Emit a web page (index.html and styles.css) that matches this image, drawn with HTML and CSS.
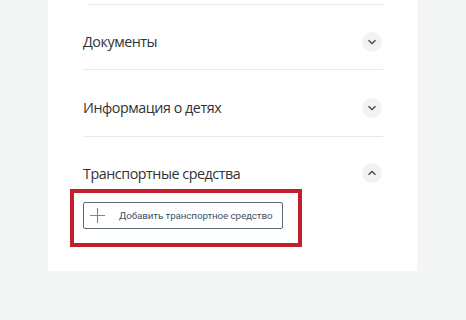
FILE: index.html
```html
<!DOCTYPE html>
<html lang="ru">
<head>
<meta charset="utf-8">
<link rel="stylesheet" href="styles.css">
</head>
<body>
<div class="page">
  <div class="card">
    <div class="top-line"></div>
    <div class="row">
      <span class="title">Документы</span>
      <span class="chev"><svg width="10" height="6" viewBox="0 0 10 6"><path d="M1.5 1.2 L5 4.6 L8.5 1.2" fill="none" stroke="#4a4f55" stroke-width="1.4"/></svg></span>
    </div>
    <div class="row">
      <span class="title">Информация о детях</span>
      <span class="chev"><svg width="10" height="6" viewBox="0 0 10 6"><path d="M1.5 1.2 L5 4.6 L8.5 1.2" fill="none" stroke="#4a4f55" stroke-width="1.4"/></svg></span>
    </div>
    <div class="row open">
      <span class="title">Транспортные средства</span>
      <span class="chev"><svg width="10" height="6" viewBox="0 0 10 6"><path d="M1.5 4.8 L5 1.4 L8.5 4.8" fill="none" stroke="#4a4f55" stroke-width="1.4"/></svg></span>
    </div>
    <div class="highlight">
      <button class="add-btn">
        <svg class="plus" width="15" height="15" viewBox="0 0 15 15"><path d="M7.5 0 V15 M0 7.5 H15" stroke="#7d858c" stroke-width="1.1"/></svg>
        <span class="btn-label">Добавить транспортное средство</span>
      </button>
    </div>
  </div>
</div>
</body>
</html>
```

FILE: styles.css
```css
html, body {
  margin: 0;
  padding: 0;
  background: #f3f5f5;
}
.page {
  width: 466px;
  height: 320px;
  padding-left: 48px;
  box-sizing: border-box;
}
.card {
  width: 369px;
  height: 271px;
  background: #ffffff;
  padding: 4px 34px 0 35px;
  box-sizing: border-box;
  font-family: "Open Sans", sans-serif;
}
.top-line {
  height: 1px;
  background: #e6e8ea;
  margin-left: 4px;
}
.row {
  display: flex;
  align-items: center;
  justify-content: space-between;
  height: 65px;
  border-bottom: 1px solid #e6e8ea;
  padding-top: 9px;
  box-sizing: border-box;
}
.row:nth-of-type(3) {
  height: 67px;
}
.row.open {
  border-bottom: none;
  height: 52px;
  padding-top: 20px;
}
.title {
  font-size: 14.3px;
  letter-spacing: -0.45px;
  color: #2f3336;
}
.chev {
  width: 20px;
  height: 20px;
  border-radius: 50%;
  background: #f1f3f3;
  display: flex;
  align-items: center;
  justify-content: center;
  margin-right: 1px;
}
.highlight {
  margin-left: -13px;
  width: 232px;
  height: 58px;
  border: 4px solid #c21e2b;
  box-sizing: border-box;
  padding: 9px 0 0 9px;
}
.add-btn {
  width: 200px;
  height: 27px;
  border: 1px solid #5b6a78;
  border-radius: 2px;
  background: #fff;
  display: flex;
  align-items: center;
  padding: 0 0 0 6px;
  gap: 14px;
  font-family: "Roboto", sans-serif;
  font-size: 9.8px;
  color: #3d5368;
  box-sizing: border-box;
  white-space: nowrap;
  text-align: left;
}
.plus {
  flex: none;
}
.btn-label {
  letter-spacing: -0.1px;
}
```
